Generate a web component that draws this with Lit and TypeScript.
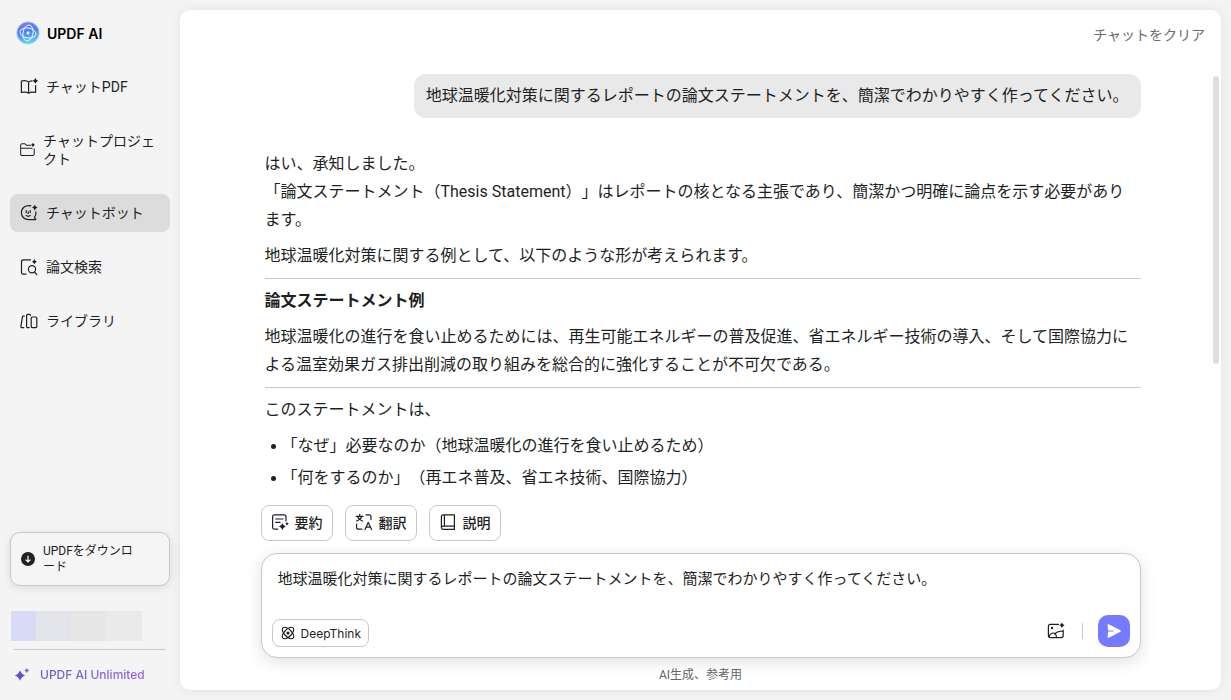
import { LitElement, html, css, svg } from "lit";
import { customElement, state } from "lit/decorators.js";

const spark = (x: number, y: number, r: number) => {
  const k = r * 0.25;
  return svg`<path class="solid" d="M${x} ${y - r}Q${x + k} ${y - k} ${x + r} ${y}Q${x + k} ${y + k} ${x} ${y + r}Q${x - k} ${y + k} ${x - r} ${y}Q${x - k} ${y - k} ${x} ${y - r}Z"/>`;
};

const icons: Record<string, unknown> = {
  pdf: svg`<path d="M8.6 4.2C7.2 2.6 4 2.5 1.4 3V14.4C4 13.9 7 14 8.6 15.2C10.200 14 13 13.900 15.600 14.400V7.600M8.600 4.200V15.200M8.600 4.200C9.400 3.400 10.400 3 12 2.900"/>${spark(15.4, 2.9, 2.8)}`,
  project: svg`<path d="M17 7.400V13.800Q17 15.600 15.200 15.600H2.600Q0.800 15.600 0.800 13.800V3.200Q0.800 1.600 2.400 1.600H6L8 3.400H12.600M1 6.800H14.600"/>${spark(15.6, 3, 2.6)}`,
  bot: svg`<path d="M10.800 1.900C5.600.600 1.400 4 1.400 8.800C1.400 13 4.600 15.600 8.600 15.600H15.800L14.400 13.400C15.800 11.800 16.200 9.800 15.800 7.800M6.200 6.600V8.600M10.200 6.600V8.600M6.200 11.600Q8.200 13 10.200 11.600M8.200 7.800V9.400"/>${spark(14.8, 3.6, 2.8)}`,
  search: svg`<path d="M10.5 1.800H3.200Q1.500 1.800 1.500 3.500V14.500Q1.500 16.200 3.200 16.200H6M14.600 14.200L16.800 16.600"/><circle cx="12" cy="11.200" r="3.600"/>${spark(14.4, 3.8, 2.5)}`,
  library: svg`<path d="M4.200 4.200H3.400Q2.600 4.200 2.400 5.200L0.900 14.400Q0.800 15.600 1.800 15.600H3.800M7.600 2.400H9.400Q10.400 2.400 10.400 3.400M7.600 2.400Q6.600 2.400 6.600 3.400V14.600Q6.600 15.600 7.600 15.600H9.200"/><rect x="11.200" y="5" width="5.600" height="10.600" rx="1"/>`,
  summary: svg`<path d="M6.800 16.200H3.600Q1.600 16.200 1.600 14.200V3.800Q1.600 1.800 3.600 1.800H13Q15 1.800 15 3.800V8M4.800 6H12M4.800 9.400H9"/>${spark(11.4, 13.6, 3.4)}${spark(16, 10.8, 1.8)}`,
  translate: svg`<path d="M1.400 3.400H8M4.700 1.400V3.400M2.600 3.600Q3.600 6.400 7.600 8M6.800 3.600Q5.800 6.400 1.600 8M11 1.800H14Q16 1.800 16 3.800V6.600M1.600 11V14.200Q1.600 16.200 3.600 16.200H7M10 16.600L13.200 9.400L16.600 16.600M11.200 14.200H15.400"/>`,
  book: svg`<path d="M15.400 13.200V1.800H4.200Q2.400 1.800 2.400 3.600V14.800Q2.400 13.200 4.200 13.200H15.400V16.400H4.200Q2.400 16.400 2.400 14.800M5.400 1.800V13.200"/>`,
  atom: svg`<g stroke-width="1.500"><ellipse cx="9" cy="9" rx="9.400" ry="4.600" transform="rotate(45 9 9)"/><ellipse cx="9" cy="9" rx="9.400" ry="4.600" transform="rotate(-45 9 9)"/></g><circle class="solid" cx="9" cy="9" r="2"/>`,
  image: svg`<path d="M11.400 2.400H3.400Q1.400 2.400 1.400 4.400V13.600Q1.400 15.600 3.400 15.600H14.200Q16.200 15.600 16.200 13.600V8M2 14.800Q3.600 11 6.400 11Q9 11 9.600 15.400M7.800 12Q10.400 8.600 16 9.400"/><circle class="solid" cx="5" cy="6" r="1.200"/>${spark(14.9, 3.2, 2.8)}`,
};

const icon = (name: string) =>
  html`<svg class="icon" viewBox="0 0 18 18" aria-hidden="true">${icons[name]}</svg>`;

const NAV = [
  { icon: "pdf", label: "チャットPDF" },
  { icon: "project", label: "チャットプロジェクト" },
  { icon: "bot", label: "チャットボット" },
  { icon: "search", label: "論文検索" },
  { icon: "library", label: "ライブラリ" },
];

const ACTIONS = [
  { icon: "summary", label: "要約" },
  { icon: "translate", label: "翻訳" },
  { icon: "book", label: "説明" },
];

const PROMPT =
  "地球温暖化対策に関するレポートの論文ステートメントを、簡潔でわかりやすく作ってください。";

@customElement("app-root")
export class AppRoot extends LitElement {
  @state() private active = 2;
  @state() private draft = PROMPT;

  static styles = css`
    :host {
      display: flex;
      height: 100vh;
      box-sizing: border-box;
      background: #f4f4f4;
      color: #1d1f24;
      font-family: Roboto, "Noto Sans CJK JP", sans-serif;
      font-size: 14px;
      text-spacing-trim: space-all;
    }
    * { box-sizing: border-box; }
    button, textarea { font: inherit; color: inherit; margin: 0; }
    button { cursor: pointer; }
    a { color: inherit; text-decoration: none; }
    .icon {
      width: 18px;
      height: 18px;
      flex: 0 1 auto;
      fill: none;
      stroke: currentColor;
      stroke-width: 1.2;
      stroke-linecap: round;
      stroke-linejoin: round;
    }
    .solid { fill: currentColor; stroke: none; }

    .sidebar {
      flex: 0 0 180px;
      display: flex;
      flex-direction: column;
      padding: 20px 10px 16px;
    }
    .brand {
      display: flex;
      align-items: center;
      gap: 7px;
      height: 26px;
      padding-left: 6px;
      color: #000;
      font-family: Inter, sans-serif;
      font-size: 14px;
      font-weight: 600;
    }
    .logo { width: 24px; height: 24px; }
    .nav {
      display: flex;
      flex-direction: column;
      gap: 16px;
      margin-top: 22px;
    }
    .nav a {
      display: flex;
      align-items: center;
      gap: 8px;
      padding: 10px;
      border-radius: 8px;
      line-height: 18px;
    }
    .nav a.active { background: #dcdcdc; }
    .foot { margin-top: auto; }
    .download {
      display: flex;
      align-items: center;
      gap: 8px;
      width: 100%;
      height: 54px;
      padding: 0 32px 0 10px;
      border: 1px solid #c8c8c8;
      border-radius: 10px;
      background: #f5f5f5;
      box-shadow: 0 2px 8px rgba(0, 0, 0, 0.1);
      font-size: 12px;
      line-height: 16px;
      text-align: left;
    }
    .download svg { flex: 0 0 14px; height: 14px; }
    .account {
      display: grid;
      grid-template-columns: 25px 35px 36px 35px;
      height: 30px;
      margin: 25px 0 0 1px;
    }
    .account i:nth-child(1) { background: #d9daf5; }
    .account i:nth-child(2) { background: #e3e4e9; }
    .account i:nth-child(3) { background: #e7e7e7; }
    .account i:nth-child(4) { background: #eaeaea; }
    .line {
      height: 1px;
      margin: 8px 4px 0;
      border: 0;
      background: #c8c8c8;
    }
    .plan {
      display: flex;
      align-items: center;
      gap: 10px;
      margin-top: 16px;
      padding-left: 4px;
      font-family: Inter, sans-serif;
      font-size: 12px;
      font-weight: 500;
      line-height: 18px;
    }
    .plan svg { width: 16px; height: 16px; }
    .plan span {
      background: linear-gradient(90deg, #6a5fd0, #9a5fe6);
      background-clip: text;
      -webkit-background-clip: text;
      color: transparent;
    }

    .main {
      position: relative;
      flex: 1;
      min-width: 0;
      display: flex;
      flex-direction: column;
      margin: 10px 10px 10px 0;
      border-radius: 10px;
      background: #fff;
      box-shadow: 0 0 12px rgba(0, 0, 0, 0.08);
    }
    .top {
      display: flex;
      justify-content: flex-end;
      align-items: center;
      height: 50px;
      padding: 0 16px;
    }
    .clear {
      padding: 0;
      border: 0;
      background: none;
      color: #6b6b6b;
      line-height: 20px;
    }
    .thumb {
      position: absolute;
      top: 66px;
      right: 2px;
      width: 6px;
      height: 288px;
      border-radius: 3px;
      background: #dddee0;
    }
    .col {
      width: 100%;
      max-width: 880px;
      margin: 0 auto;
    }
    .scroll {
      flex: 1;
      min-height: 0;
      overflow: hidden;
      padding-top: 14px;
    }
    .chat {
      display: flex;
      flex-direction: column;
      gap: 32px;
      padding-left: 4px;
      font-size: 16px;
      line-height: 28px;
    }
    .bubble {
      align-self: flex-end;
      padding: 8px 12px;
      border-radius: 12px;
      background: #e9e9e9;
    }
    .answer p {
      margin: 0 0 8px;
      padding-right: 4px;
    }
    .answer h3 {
      margin: 0 0 8px;
      font-size: 16px;
      font-weight: 700;
    }
    .answer hr {
      height: 1px;
      margin: 8px 0;
      border: 0;
      background: #c8c8c8;
    }
    .answer ul {
      margin: 0;
      padding-left: 6px;
      list-style: none;
    }
    .answer li {
      display: flex;
      align-items: center;
      gap: 6px;
      margin-bottom: 4px;
    }
    .answer li::before {
      content: "";
      flex: none;
      width: 5px;
      height: 5px;
      border-radius: 50%;
      background: currentColor;
    }
    .actions {
      display: flex;
      gap: 12px;
      margin-bottom: 12px;
    }
    .actions button {
      display: flex;
      align-items: center;
      gap: 6px;
      height: 36px;
      padding: 0 9px 2px;
      border: 1px solid #c8c8c8;
      border-radius: 8px;
      background: #fff;
      font-weight: 500;
    }
    .composer {
      display: flex;
      flex-direction: column;
      padding: 10px;
      border: 1px solid #c8c8c8;
      border-radius: 16px;
      background: #fff;
      box-shadow: 0 4px 16px rgba(0, 0, 0, 0.12);
    }
    .composer textarea {
      height: 51px;
      padding: 3px 6px;
      border: 0;
      outline: 0;
      resize: none;
      background: none;
      font-size: 15px;
      line-height: 24px;
    }
    .tools {
      display: flex;
      align-items: center;
      height: 32px;
    }
    .think {
      display: flex;
      align-items: center;
      align-self: flex-end;
      gap: 6px;
      height: 28px;
      margin-right: auto;
      padding: 0 7px 0 8px;
      border: 1px solid #c8c8c8;
      border-radius: 8px;
      background: #fff;
      font-family: Inter, sans-serif;
      font-size: 12px;
    }
    .think .icon { width: 14px; height: 14px; }
    .attach {
      display: flex;
      padding: 0;
      border: 0;
      background: none;
    }
    .sep {
      width: 1px;
      height: 16px;
      margin: 0 15px 0 17px;
      background: #c8c8c8;
    }
    .send {
      display: grid;
      place-items: center;
      width: 32px;
      height: 32px;
      padding: 0;
      border: 0;
      border-radius: 10px;
      background: #757bff;
    }
    .send svg { width: 16px; height: 16px; }
    .note {
      height: 32px;
      padding-top: 2px;
      color: #666;
      font-size: 12px;
      line-height: 30px;
      text-align: center;
    }
  `;

  render() {
    return html`
      <aside class="sidebar">
        <div class="brand">
          <svg class="logo" viewBox="0 0 24 24" aria-hidden="true">
            <defs>
              <linearGradient id="lg" x1="0" y1="0" x2="0.200" y2="1">
                <stop offset="0" stop-color="#8a78f5" />
                <stop offset="0.500" stop-color="#4a80fa" />
                <stop offset="1" stop-color="#60d0fb" />
              </linearGradient>
              <radialGradient id="edge">
                <stop offset="0.840" stop-color="#fff" />
                <stop offset="1" stop-color="#000" />
              </radialGradient>
              <mask id="soft"><circle cx="12" cy="12" r="12" fill="url(#edge)" /></mask>
            </defs>
            <circle cx="12" cy="12" r="12" fill="url(#lg)" mask="url(#soft)" />
            <g fill="none" stroke="#fff" stroke-width="0.900">
              <ellipse cx="12" cy="12" rx="8" ry="5" transform="rotate(10 12 12)" />
              <ellipse cx="12" cy="12" rx="8" ry="5" transform="rotate(100 12 12)" />
            </g>
            <circle cx="12" cy="12" r="1.400" fill="#fff" />
          </svg>
          <span>UPDF AI</span>
        </div>
        <nav class="nav">
          ${NAV.map(
            (n, i) => html`<a
              href="#"
              class=${i === this.active ? "active" : ""}
              @click=${(e: Event) => {
                e.preventDefault();
                this.active = i;
              }}
              >${icon(n.icon)}<span>${n.label}</span></a
            >`
          )}
        </nav>
        <div class="foot">
          <button class="download">
            <svg viewBox="0 0 14 14" aria-hidden="true">
              <circle cx="7" cy="7" r="7" fill="#222" />
              <path d="M7 3.800V9.800M4.600 7.600L7 10L9.400 7.600" fill="none" stroke="#fff" stroke-width="1.200" />
            </svg>
            <span>UPDFをダウンロード</span>
          </button>
          <div class="account"><i></i><i></i><i></i><i></i></div>
          <hr class="line" />
          <a class="plan" href="#">
            <svg viewBox="0 0 16 16" aria-hidden="true">
              <g color="#5a4fd8">${spark(6, 8.5, 5.2)}</g>
              <g color="#9a5fe6">${spark(12.8, 3.6, 2.6)}</g>
            </svg>
            <span>UPDF AI Unlimited</span>
          </a>
        </div>
      </aside>
      <main class="main">
        <header class="top"><button class="clear">チャットをクリア</button></header>
        <div class="scroll">
          <div class="col chat">
            <div class="bubble">${PROMPT}</div>
            <article class="answer">
              <p>
                はい、承知しました。<br />「論文ステートメント（Thesis Statement）」はレポートの核となる主張であり、簡潔かつ明確に論点を示す必要があります。
              </p>
              <p>地球温暖化対策に関する例として、以下のような形が考えられます。</p>
              <hr />
              <h3>論文ステートメント例</h3>
              <p>
                地球温暖化の進行を食い止めるためには、再生可能エネルギーの普及促進、省エネルギー技術の導入、そして国際協力による温室効果ガス排出削減の取り組みを総合的に強化することが不可欠である。
              </p>
              <hr />
              <p>このステートメントは、</p>
              <ul>
                <li>「なぜ」必要なのか（地球温暖化の進行を食い止めるため）</li>
                <li>「何をするのか」（再エネ普及、省エネ技術、国際協力）</li>
              </ul>
            </article>
          </div>
        </div>
        <div class="thumb"></div>
        <div class="col">
          <div class="actions">
            ${ACTIONS.map((a) => html`<button>${icon(a.icon)}<span>${a.label}</span></button>`)}
          </div>
          <div class="composer">
            <textarea
              aria-label="メッセージ"
              .value=${this.draft}
              @input=${(e: Event) => (this.draft = (e.target as HTMLTextAreaElement).value)}
            ></textarea>
            <div class="tools">
              <button class="think">${icon("atom")}<span>DeepThink</span></button>
              <button class="attach" aria-label="画像">${icon("image")}</button>
              <span class="sep"></span>
              <button class="send" aria-label="送信">
                <svg viewBox="0 0 16 16" aria-hidden="true">
                  <path d="M1.500 2Q1.500.8 2.800 1.300L14.400 7.200Q15.400 8 14.400 8.800L2.800 14.700Q1.500 15.200 1.500 14L2.200 8.600H7.500V7.400H2.200Z" fill="#fff" />
                </svg>
              </button>
            </div>
          </div>
        </div>
        <footer class="note">AI生成、参考用</footer>
      </main>
    `;
  }
}
